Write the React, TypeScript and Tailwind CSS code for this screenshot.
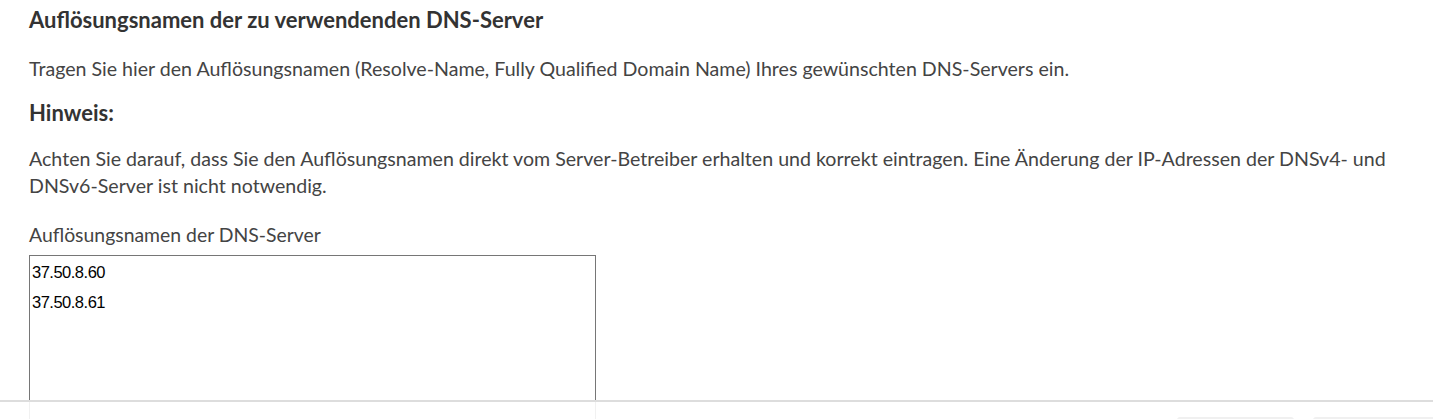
import { useState } from "react";

export default function App() {
    const [servers, setServers] = useState("37.50.8.60\n37.50.8.61");

    return (
        <div className="relative w-full h-[419px] overflow-hidden bg-white font-['Lato',sans-serif] text-[#444]">
            {/* Content */}
            <div className="flex flex-col items-start pl-[29px] pt-[8px]">
                <h2 className="text-[22px] leading-[24px] font-bold text-[#333]">Auflösungsnamen der zu verwendenden DNS-Server</h2>
                <p className="mt-[25px] text-[19.6px] leading-[24px]">
                    Tragen Sie hier den Auflösungsnamen (Resolve-Name, Fully Qualified Domain Name) Ihres gewünschten DNS-Servers ein.
                </p>
                <h3 className="mt-[20px] text-[22px] leading-[24px] font-bold text-[#333]">Hinweis:</h3>
                <p className="mt-[20px] max-w-[1395px] text-[19.6px] leading-[27px]">
                    Achten Sie darauf, dass Sie den Auflösungsnamen direkt vom Server-Betreiber erhalten und korrekt eintragen. Eine Änderung der IP-Adressen der DNSv4- und DNSv6-Server ist nicht notwendig.
                </p>

                {/* Field */}
                <label htmlFor="dns" className="mt-[24px] text-[19.4px] leading-[24px]">Auflösungsnamen der DNS-Server</label>
                <textarea
                    id="dns"
                    value={servers}
                    onChange={(e) => setServers(e.target.value)}
                    className="mt-[8px] w-[567px] h-[200px] resize-none border border-[#767676] px-[2px] pt-[1px] text-[16.5px] leading-[30px] tracking-[-0.5px] text-black font-['Liberation_Sans',sans-serif] outline-none"
                />
            </div>

            {/* Sticky footer */}
            <div className="absolute left-0 right-0 top-[400px] h-[40px] bg-white/90 border-t-2 border-[#ddd]">
                <div className="flex justify-end gap-[19px] pt-[15px]">
                    <button className="w-[117px] h-[30px] bg-[#f0f0f0] rounded-[3px]"></button>
                    <button className="w-[130px] h-[30px] bg-[#f0f0f0] rounded-[3px] -mr-[10px]"></button>
                </div>
            </div>
        </div>
    );
}
